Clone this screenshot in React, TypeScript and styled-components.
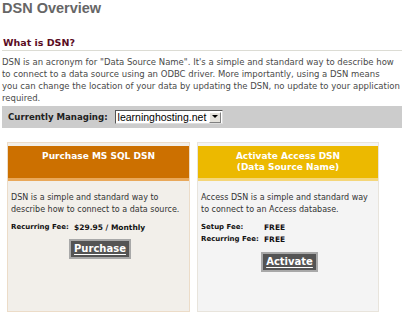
import React from "react";
import styled, { createGlobalStyle } from "styled-components";

const GlobalStyle = createGlobalStyle`
  html, body { margin: 0; padding: 0; background: #ffffff; }
  body { font-family: "DejaVu Sans", Verdana, sans-serif; }
`;

const Page = styled.div`
  width: 400px;
  padding: 0 2px;
`;

const Title = styled.h1`
  margin: 0;
  font-family: "Liberation Sans", Arial, sans-serif;
  font-size: 14.5px;
  line-height: 16px;
  font-weight: bold;
  color: #666666;
`;

const SectionTitle = styled.h2`
  margin: 22px 0 0;
  padding: 0 0 2px 1px;
  font-size: 9.5px;
  line-height: 10px;
  font-weight: bold;
  color: #5a0c1f;
  border-bottom: 1px solid #dcdcd4;
`;

const Para = styled.p`
  margin: 5px 0 0;
  font-size: 8.5px;
  line-height: 12px;
  color: #4a4a4a;
`;

const ManageBar = styled.div`
  margin-top: 2px;
  height: 22px;
  background: #cccccc;
  display: flex;
  align-items: center;
  padding-left: 6px;
  gap: 7px;
`;

const BarLabel = styled.span`
  font-size: 8.6px;
  font-weight: bold;
  color: #222222;
`;

const SelectBox = styled.div`
  width: 104px;
  height: 12px;
  background: #ffffff;
  border: 1px solid #555555;
  border-right-color: #dddddd;
  border-bottom-color: #dddddd;
  display: flex;
  align-items: center;
  justify-content: space-between;
  font-family: "Liberation Sans", Arial, sans-serif;
  font-size: 10.5px;
  color: #000000;
  padding-left: 2px;
`;

const SelectArrow = styled.span`
  width: 12px;
  height: 11px;
  background: #e4e2dc;
  border: 1px solid #ffffff;
  border-right-color: #808080;
  border-bottom-color: #808080;
  box-sizing: border-box;
  display: flex;
  align-items: center;
  justify-content: center;
  margin-right: 1px;
`;

const Cards = styled.div`
  display: grid;
  grid-template-columns: 183px 182px;
  gap: 7px;
  margin: 14px 0 0 5px;
`;

const Card = styled.div<{ $border: string; $bg: string }>`
  height: 170px;
  box-sizing: border-box;
  border: 1px solid ${(p) => p.$border};
  background: ${(p) => p.$bg};
  padding-top: 3px;
`;

const CardHeader = styled.div<{ $color: string; $strip: string }>`
  height: 35px;
  box-sizing: border-box;
  background: ${(p) => p.$color};
  border-bottom: 3px solid ${(p) => p.$strip};
  color: #ffffff;
  font-size: 9px;
  font-weight: bold;
  text-align: center;
  line-height: 11px;
  padding-top: 5px;
`;

const CardBody = styled.div`
  padding: 11px 4px 0 3px;
  font-size: 8px;
  line-height: 12px;
  color: #333333;
`;

const FeeTable = styled.div`
  display: grid;
  grid-template-columns: 63px auto;
  margin-top: 6px;
  align-items: center;
`;

const FeeLabel = styled.span`
  font-size: 7px;
  font-weight: bold;
  color: #111111;
  line-height: 11.5px;
`;

const FeeValue = styled.span`
  font-size: 7.5px;
  font-weight: bold;
  color: #111111;
  line-height: 11.5px;
`;

const ButtonRow = styled.div<{ $gap: number }>`
  display: flex;
  justify-content: center;
  margin-top: ${(p) => p.$gap}px;
  padding-left: 4px;
`;

const ActionButton = styled.span`
  display: inline-block;
  background: #545454;
  border: 2px solid #a8a8a8;
  color: #ffffff;
  font-size: 10px;
  font-weight: bold;
  text-decoration: underline;
  text-decoration-thickness: 1px;
  text-underline-offset: 2px;
  line-height: 16px;
  padding: 0 3px;
`;

export default function App() {
  return (
    <>
      <GlobalStyle />
      <Page>
        <Title>DSN Overview</Title>
        <SectionTitle>What is DSN?</SectionTitle>
        <Para>
          DSN is an acronym for "Data Source Name". It's a simple and standard way to describe how
          <br />
          to connect to a data source using an ODBC driver. More importantly, using a DSN means
          <br />
          you can change the location of your data by updating the DSN, no update to your application
          <br />
          required.
        </Para>
        <ManageBar>
          <BarLabel>Currently Managing:</BarLabel>
          <SelectBox>
            <span>learninghosting.net</span>
            <SelectArrow>
              <svg width="6" height="4" viewBox="0 0 6 4">
                <path d="M0 0 H6 L3 3 Z" fill="#000" />
              </svg>
            </SelectArrow>
          </SelectBox>
        </ManageBar>
        <Cards>
          <Card $border="#ecdcc8" $bg="#f2efea">
            <CardHeader $color="#cc7000" $strip="#e9a85a">Purchase MS SQL DSN</CardHeader>
            <CardBody>
              DSN is a simple and standard way to describe how to connect to a data source.
              <FeeTable>
                <FeeLabel>Recurring Fee:</FeeLabel>
                <FeeValue>$29.95 / Monthly</FeeValue>
              </FeeTable>
              <ButtonRow $gap={5}>
                <ActionButton>Purchase</ActionButton>
              </ButtonRow>
            </CardBody>
          </Card>
          <Card $border="#e8e4dc" $bg="#f4f4f4">
            <CardHeader $color="#ecb900" $strip="#f4d67a">
              Activate Access DSN
              <br />
              (Data Source Name)
            </CardHeader>
            <CardBody>
              Access DSN is a simple and standard way to connect to an Access database.
              <FeeTable>
                <FeeLabel>Setup Fee:</FeeLabel>
                <FeeValue>FREE</FeeValue>
                <FeeLabel>Recurring Fee:</FeeLabel>
                <FeeValue>FREE</FeeValue>
              </FeeTable>
              <ButtonRow $gap={7}>
                <ActionButton>Activate</ActionButton>
              </ButtonRow>
            </CardBody>
          </Card>
        </Cards>
      </Page>
    </>
  );
}
